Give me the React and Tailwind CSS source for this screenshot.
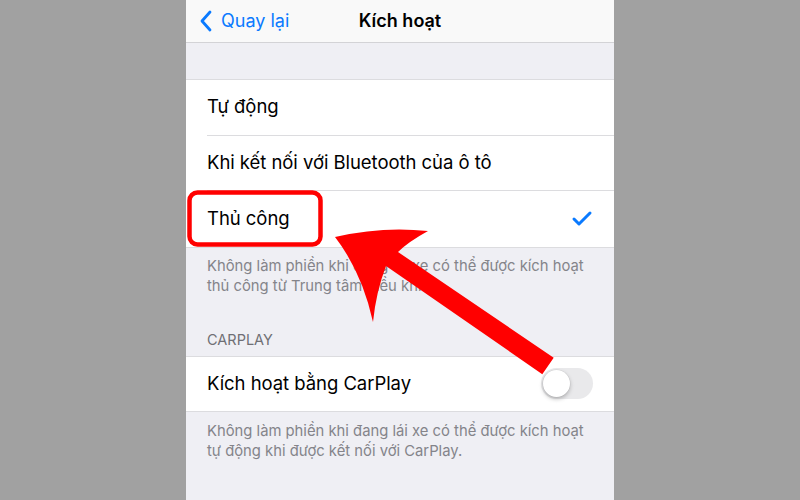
import { Check } from 'lucide-react'

const font = { fontFamily: 'Inter, "Noto Sans", sans-serif' }

function Row({ children, last, right }) {
  return (
    <div className="flex h-[55.5px] items-stretch bg-white pl-[21px]">
      <div className={`flex flex-1 items-center justify-between pr-[26px] ${last ? '' : 'border-b border-[#dcdcdf]'}`}>
        <span className="text-[18.5px] tracking-[-0.05px] text-black">{children}</span>
        {right}
      </div>
    </div>
  )
}

export default function App() {
  return (
    <div className="relative flex h-[500px] w-[800px] justify-center overflow-hidden bg-[#a1a1a1]" style={font}>
      <div className="flex h-[500px] w-[428px] flex-col bg-[#efeff4]">
        {/* nav bar */}
        <div className="relative flex h-[43px] shrink-0 items-center border-b border-[#d3d3d6] bg-[#f9f9f9]">
          <div className="flex items-center pl-[13px] text-[#0a7aff]">
            <svg width="14" height="22" viewBox="0 0 14 22" className="mr-[8px]">
              <path d="M11 2 L3 11 L11 20" fill="none" stroke="#0a7aff" strokeWidth="2.8" strokeLinecap="round" strokeLinejoin="round" />
            </svg>
            <span className="text-[18px] leading-none">Quay lại</span>
          </div>
          <div className="absolute inset-x-0 -mt-[2px] text-center text-[18px] font-semibold text-black">Kích hoạt</div>
        </div>

        <div className="h-[36px] shrink-0" />

        <div className="border-t border-[#dcdcdf]">
          <Row>Tự động</Row>
          <Row>Khi kết nối với Bluetooth của ô tô</Row>
          <Row last right={<Check size={24} strokeWidth={3} className="-mr-[6px] text-[#0a7aff]" />}>Thủ công</Row>
        </div>

        <div className="border-t border-[#dcdcdf] px-[21px] pt-[8px] text-[14.8px] leading-[20px] text-[#84848a]">
          Không làm phiền khi đang lái xe có thể được kích hoạt thủ công từ Trung tâm điều khiển.
        </div>

        <div className="px-[21px] pb-[6px] pt-[34px] text-[14.5px] leading-[20px] text-[#6f6f74]">CARPLAY</div>

        <div className="border-y border-[#dcdcdf]">
          <div className="flex h-[54px] items-center justify-between bg-white pl-[21px] pr-[21px]">
            <span className="text-[18.5px] tracking-[-0.05px] text-black">Kích hoạt bằng CarPlay</span>
            <div className="flex h-[31px] w-[52px] items-center rounded-full bg-[#e9e9eb] p-[2px]">
              <div className="h-[27px] w-[27px] rounded-full bg-white shadow-[0_2px_4px_rgba(0,0,0,0.25),0_0_0_0.5px_rgba(0,0,0,0.06)]" />
            </div>
          </div>
        </div>

        <div className="px-[21px] pt-[9px] text-[14.8px] leading-[20px] text-[#84848a]">
          Không làm phiền khi đang lái xe có thể được kích hoạt tự động khi được kết nối với CarPlay.
        </div>
      </div>

      {/* annotation overlay */}
      <svg className="pointer-events-none absolute inset-0" width="800" height="500" viewBox="0 0 800 500">
        <rect x="189.5" y="192.5" width="131" height="52" rx="8" fill="none" stroke="#ff0000" strokeWidth="4.5" />
        <path
          d="M 335 237 Q 382 226 428 231 Q 408 242 398 252 L 553.7 357.8 L 542.3 374.2 L 386 266 Q 376 292 373 322 Q 362 272 335 237 Z"
          fill="#ff0000"
        />
      </svg>
    </div>
  )
}
